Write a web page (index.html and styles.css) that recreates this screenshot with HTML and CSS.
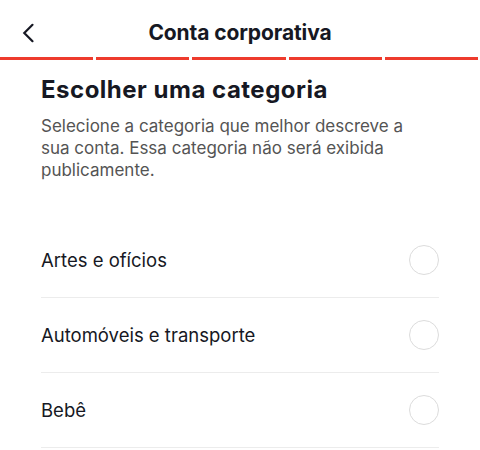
FILE: index.html
```html
<!DOCTYPE html>
<html lang="pt">
<head>
<meta charset="utf-8">
<title>Conta corporativa</title>
<link rel="stylesheet" href="styles.css">
</head>
<body>
<header class="topbar">
  <button class="back" aria-label="Voltar">
    <svg width="14" height="20" viewBox="0 0 14 20"><path d="M11.5 1.8 L3.3 10 L11.5 18.2" fill="none" stroke="#161823" stroke-width="2.2" stroke-linecap="round" stroke-linejoin="miter"/></svg>
  </button>
  <h1 class="title">Conta corporativa</h1>
</header>
<div class="progress">
  <span class="seg"></span><span class="seg"></span><span class="seg"></span><span class="seg"></span><span class="seg"></span>
</div>
<main class="content">
  <h2 class="heading">Escolher uma categoria</h2>
  <p class="desc">Selecione a categoria que melhor descreve a sua conta. Essa categoria não será exibida publicamente.</p>
  <ul class="list">
    <li class="row"><span class="label">Artes e ofícios</span><span class="radio"></span></li>
    <li class="row"><span class="label">Automóveis e transporte</span><span class="radio"></span></li>
    <li class="row"><span class="label">Bebê</span><span class="radio"></span></li>
  </ul>
</main>
</body>
</html>
```
FILE: styles.css
```css
* { box-sizing: border-box; }
html, body { margin: 0; padding: 0; background: #fff; }
body {
  font-family: Inter, "Noto Sans", "Liberation Sans", sans-serif;
  color: #161823;
  width: 480px;
  overflow: hidden;
}
.topbar {
  position: relative;
  height: 57px;
  display: flex;
  align-items: center;
  justify-content: center;
}
.back {
  position: absolute;
  left: 21px;
  top: 23px;
  border: 0;
  background: none;
  padding: 0;
  width: 14px;
  height: 20px;
  display: flex;
}
.title {
  margin: 0;
  font-size: 21px;
  font-weight: 700;
  letter-spacing: -0.1px;
  padding-top: 7px;
}
.progress {
  display: flex;
  gap: 3px;
  padding-right: 2px;
  height: 3px;
}
.seg {
  flex: 1;
  background: #ee3b2d;
}
.content {
  padding: 0 41px;
}
.heading {
  margin: 15px 0 0;
  font-size: 24px;
  font-weight: 700;
  letter-spacing: 0.5px;
  line-height: 30px;
}
.desc {
  margin: 10px 0 0;
  padding-right: 4px;
  font-size: 17px;
  line-height: 22px;
  color: #545454;
}
.list {
  list-style: none;
  margin: 42px 0 0;
  padding: 0;
}
.row {
  height: 75px;
  display: flex;
  align-items: center;
  justify-content: space-between;
  border-bottom: 1px solid #ececec;
}
.label {
  font-size: 18.5px;
}
.radio {
  width: 30px;
  height: 30px;
  border-radius: 50%;
  border: 1.5px solid #dcdcdc;
}
```
